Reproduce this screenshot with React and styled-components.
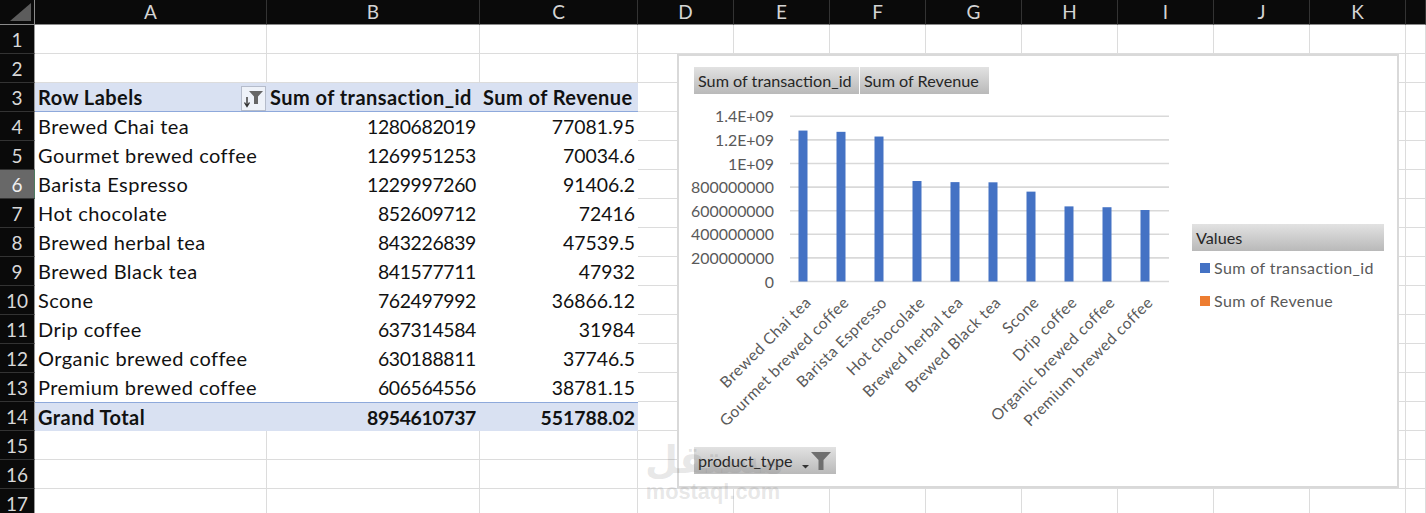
import React from 'react'
import styled, { createGlobalStyle } from 'styled-components'

const GlobalStyle = createGlobalStyle`
  html, body {
    margin: 0;
    padding: 0;
    background: #fff;
  }
  body {
    font-family: Lato, "Open Sans", sans-serif;
  }
`

const COLUMNS = ['A', 'B', 'C', 'D', 'E', 'F', 'G', 'H', 'I', 'J', 'K', '']

const PRODUCTS = [
  ['Brewed Chai tea', 1280682019, '77081.95'],
  ['Gourmet brewed coffee', 1269951253, '70034.6'],
  ['Barista Espresso', 1229997260, '91406.2'],
  ['Hot chocolate', 852609712, '72416'],
  ['Brewed herbal tea', 843226839, '47539.5'],
  ['Brewed Black tea', 841577711, '47932'],
  ['Scone', 762497992, '36866.12'],
  ['Drip coffee', 637314584, '31984'],
  ['Organic brewed coffee', 630188811, '37746.5'],
  ['Premium brewed coffee', 606564556, '38781.15'],
]

const TICKS = ['0', '200000000', '400000000', '600000000', '800000000', '1E+09', '1.2E+09', '1.4E+09']

const Sheet = styled.div`
  position: relative;
  width: 1426px;
  height: 513px;
  overflow: hidden;
  background: #fff;
`

const Grid = styled.div`
  display: grid;
  grid-template-columns: 35px 232px 213px 158px repeat(8, 96px) 20px;
  grid-template-rows: 25px repeat(17, 29px);
`

const Corner = styled.div`
  background: #0a0a0a;
  border-bottom: 1px solid #8a8a8a;
  border-right: 1px solid #8a8a8a;
  box-sizing: border-box;
  display: flex;
  justify-content: flex-end;
  align-items: flex-end;
  padding: 0 3px 3px 0;

  &::after {
    content: '';
    width: 21px;
    height: 18px;
    background: #5c5c5c;
    clip-path: polygon(100% 0, 100% 100%, 0 100%);
  }
`

const ColHead = styled.div`
  background: #0a0a0a;
  color: #d4d4d4;
  font-size: 19px;
  line-height: 23px;
  text-align: center;
  box-sizing: border-box;
  border-bottom: 1px solid #8a8a8a;
  border-right: 1px solid #333;
`

const RowHead = styled.div`
  background: ${p => (p.$active ? '#686868' : '#0a0a0a')};
  color: ${p => (p.$active ? '#f0f0f0' : '#d8d8d8')};
  font-size: 19px;
  line-height: 29px;
  text-align: center;
  box-sizing: border-box;
  border-bottom: 1px solid #333;
  border-right: 1px solid ${p => (p.$active ? '#4d7a5f' : '#9a9a9a')};
`

const Blank = styled.div`
  box-sizing: border-box;
  border-right: 1px solid #dcdcdc;
  border-bottom: 1px solid #dcdcdc;
`

const PivotCell = styled.div`
  position: relative;
  box-sizing: border-box;
  padding: 2px 3px 0 3px;
  color: #111;
  font-size: 20px;
  line-height: 25px;
  white-space: nowrap;
  text-align: left;
  letter-spacing: 0.45px;
  font-weight: ${p => (p.$strong ? 700 : 400)};
  background: ${p => (p.$strong ? '#d9e1f2' : '#fff')};
  border-bottom: ${p => (p.$head ? '1px solid #8ea9db' : '0')};
  border-top: ${p => (p.$foot ? '1px solid #8ea9db' : '0')};
`

const NumberCell = styled(PivotCell)`
  text-align: right;
  font-size: 19.4px;
  padding-right: ${p => (p.$last ? 3 : 4)}px;
  letter-spacing: ${p => (p.$last ? '0' : '-0.35px')};
`

const FilterButton = styled.div`
  position: absolute;
  right: 1px;
  top: 3px;
  width: 25px;
  height: 25px;
  box-sizing: border-box;
  background: #eef2f9;
  border: 1px solid #b5bccb;
  display: flex;
  align-items: center;
  justify-content: center;
`

const Chart = styled.div`
  position: absolute;
  left: 677px;
  top: 54px;
  width: 722px;
  height: 434px;
  box-sizing: border-box;
  border: 2px solid #d9d9d9;
  background: #fff;
  display: flex;
  flex-direction: column;
  padding-top: 11px;
`

const FieldRow = styled.div`
  display: flex;
  gap: 1px;
  margin-left: 15px;
`

const FieldButton = styled.div`
  height: 27px;
  box-sizing: border-box;
  padding: 0 4px;
  background: linear-gradient(#e2e2e2, #b9b9b9);
  color: #262626;
  font-size: 16.2px;
  white-space: nowrap;
  display: flex;
  align-items: center;
  justify-content: space-between;
  width: ${p => p.$width}px;
`

const ChartBody = styled.div`
  display: flex;
  height: 347px;
  margin-top: 6px;
`

const Plot = styled.svg`
  display: block;
  width: 511px;
  height: 347px;
  flex: none;
  font-family: Lato, sans-serif;
`

const Legend = styled.div`
  margin: 124px 0 0 2px;
  width: 192px;
`

const LegendTitle = styled.div`
  height: 27px;
  padding-left: 4px;
  background: linear-gradient(#e2e2e2, #b9b9b9);
  color: #262626;
  font-size: 16.2px;
  line-height: 28px;
`

const LegendItem = styled.div`
  display: flex;
  align-items: center;
  gap: 4px;
  height: 33px;
  margin-left: 8px;
  color: #595959;
  font-size: 16px;
  letter-spacing: 0.4px;
  white-space: nowrap;
`

const LegendSwatch = styled.span`
  width: 10px;
  height: 10px;
  background: ${p => p.$color};
`

const FilterRow = styled.div`
  margin: 0 0 0 15px;
`

const Watermark = styled.div`
  position: absolute;
  left: 645px;
  top: 438px;
  width: 136px;
  text-align: center;
  color: rgba(110, 110, 110, 0.17);
  font-weight: 700;
  pointer-events: none;
`

const WatermarkLogo = styled.div`
  font-family: "DejaVu Sans", sans-serif;
  font-size: 38px;
  line-height: 44px;
  white-space: nowrap;
`

const WatermarkSite = styled.div`
  font-family: "Liberation Sans", sans-serif;
  font-size: 21.8px;
  line-height: 20px;
`

const SortFilterIcon = () => (
  <svg width="21" height="20" viewBox="0 0 21 20">
    <path d="M4 8v9M1.5 13.5 4 17.5 6.500 13.5" fill="none" stroke="#333" strokeWidth="1.4" />
    <path d="M6 2h14l-5 5.500V15h-4V7.500z" fill="#666" />
  </svg>
)

const DropFilterIcon = () => (
  <svg width="30" height="20" viewBox="0 0 30 20">
    <path d="M0 14h7l-3.500 3.500z" fill="#333" />
    <path d="M9 1h20l-7.500 8v10h-5V9z" fill="#6f6f6f" />
  </svg>
)

const ChartPlot = () => {
  // svg origin sits at page x 679, y 100
  const x0 = 111
  const width = 379
  const base = 181.5
  const tickStep = 23.6
  const scale = 165 / 1400000000

  return (
    <Plot viewBox="0 0 511 347">
      {TICKS.map((tick, i) => {
        const y = base - i * tickStep
        return (
          <g key={tick}>
            <line x1={x0} x2={x0 + width} y1={y} y2={y} stroke="#d9d9d9" strokeWidth="1.6" />
            <text x="95" y={y + 6} textAnchor="end" fontSize="15.9" fill="#595959">{tick}</text>
          </g>
        )
      })}
      {PRODUCTS.map(([name, value], i) => {
        const cx = 124 + i * 38
        const h = value * scale
        return (
          <g key={name}>
            <rect x={cx - 4.5} y={base - h} width="9" height={h} fill="#4472c4" />
            <text
              transform={`translate(${cx + 9} ${base + 22}) rotate(-45)`}
              textAnchor="end"
              fontSize="15.6"
              letterSpacing="0.55"
              fill="#595959"
            >
              {name}
            </text>
          </g>
        )
      })}
    </Plot>
  )
}

const pivotCell = (row, col) => {
  if (row === 3) {
    const labels = ['Row Labels', 'Sum of transaction_id', 'Sum of Revenue']
    return (
      <PivotCell key={col} $strong $head>
        {labels[col]}
        {col === 0 && <FilterButton><SortFilterIcon /></FilterButton>}
      </PivotCell>
    )
  }
  if (row === 14) {
    const labels = ['Grand Total', '8954610737', '551788.02']
    return col === 0
      ? <PivotCell key={col} $strong $foot>{labels[col]}</PivotCell>
      : <NumberCell key={col} $strong $foot $last={col === 2}>{labels[col]}</NumberCell>
  }
  const item = PRODUCTS[row - 4]
  return col === 0
    ? <PivotCell key={col}>{item[col]}</PivotCell>
    : <NumberCell key={col} $last={col === 2}>{item[col]}</NumberCell>
}

const App = () => {
  const rows = Array.from({ length: 17 }, (_, i) => i + 1)

  return (
    <Sheet>
      <GlobalStyle />
      <Grid>
        <Corner />
        {COLUMNS.map((c, i) => <ColHead key={i}>{c}</ColHead>)}
        {rows.map(row => (
          <React.Fragment key={row}>
            <RowHead $active={row === 6}>{row}</RowHead>
            {COLUMNS.map((c, col) => (
              row >= 3 && row <= 14 && col < 3
                ? pivotCell(row, col)
                : <Blank key={col} />
            ))}
          </React.Fragment>
        ))}
      </Grid>
      <Chart>
        <FieldRow>
          <FieldButton $width={165}>Sum of transaction_id</FieldButton>
          <FieldButton $width={129}>Sum of Revenue</FieldButton>
        </FieldRow>
        <ChartBody>
          <ChartPlot />
          <Legend>
            <LegendTitle>Values</LegendTitle>
            <LegendItem><LegendSwatch $color="#4472c4" />Sum of transaction_id</LegendItem>
            <LegendItem><LegendSwatch $color="#ed7d31" />Sum of Revenue</LegendItem>
          </Legend>
        </ChartBody>
        <FilterRow>
          <FieldButton $width={142}>product_type<DropFilterIcon /></FieldButton>
        </FilterRow>
      </Chart>
      <Watermark>
        <WatermarkLogo>مستقل</WatermarkLogo>
        <WatermarkSite>mostaql.com</WatermarkSite>
      </Watermark>
    </Sheet>
  )
}

export default App
